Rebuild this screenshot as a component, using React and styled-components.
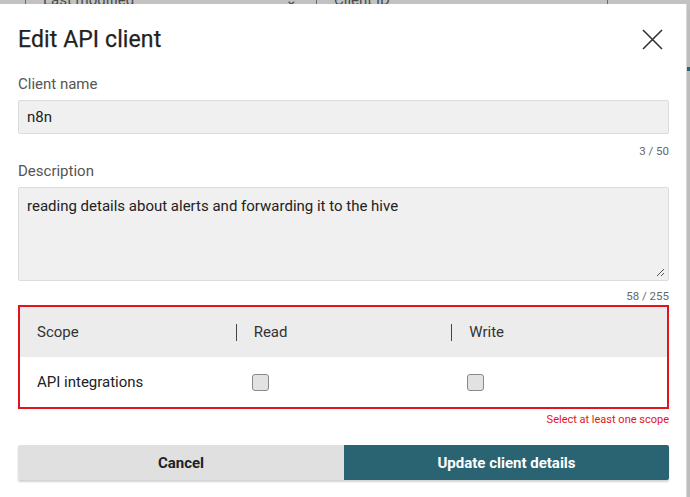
import React from "react";
import styled, { createGlobalStyle } from "styled-components";

const Global = createGlobalStyle`
  html, body { margin: 0; padding: 0; }
  body {
    width: 690px; height: 497px; overflow: hidden;
    background: #bdbdbd;
    font-family: Roboto, "Liberation Sans", Arial, sans-serif;
  }
  * { box-sizing: border-box; }
`;

const Page = styled.div`
  position: relative;
  width: 690px;
  height: 497px;
  overflow: hidden;
  background: #bdbdbd;
`;

const BgHeader = styled.div`
  display: grid;
  grid-template-columns: 25px 291px 291px 1fr;
  height: 20px;
  margin-top: -10px;
  background: #c2c2c2;
  color: #4a4a4a;
  font-size: 15px;
  align-items: center;
`;

const BgCell = styled.div`
  display: flex;
  align-items: center;
  justify-content: space-between;
  height: 100%;
  padding: 0 18px 0 ${(p) => p.$pad || 0}px;
  border-left: ${(p) => (p.$line ? "1px solid #6a6a6a" : "none")};
`;

const Overlay = styled.div`
  position: absolute;
  left: 0;
  top: 4px;
  width: 687px;
  height: 500px;
  background: #ffffff;
  border-right: 1px solid #d8d8d8;
  padding: 0 17px 0 18px;
  display: flex;
  flex-direction: column;
`;

const SideMark = styled.div`
  position: absolute;
  right: 0;
  top: 67px;
  width: 3px;
  height: 4px;
  background: #2a6473;
`;

const Header = styled.div`
  display: flex;
  align-items: center;
  justify-content: space-between;
  height: 70px;
`;

const Title = styled.h2`
  margin: 0;
  font-size: 23px;
  font-weight: 400;
  color: #222;
  letter-spacing: 0.1px;
  -webkit-text-stroke: 0.25px #222;
`;

const Close = styled.button`
  width: 24px;
  height: 24px;
  border: none;
  background: none;
  padding: 0;
  margin-right: 5px;
  display: flex;
  align-items: center;
  justify-content: center;
  cursor: pointer;
`;

const Label = styled.div`
  font-size: 15px;
  color: #555;
  height: 20px;
  line-height: 20px;
  margin-top: ${(p) => p.$mt || 0}px;
  margin-bottom: 6px;
`;

const Input = styled.div`
  height: 34px;
  background: #f0f0f0;
  border: 1px solid #dcdcdc;
  border-radius: 2px;
  padding: 0 8px;
  display: flex;
  align-items: center;
  font-size: 15px;
  color: #222;
`;

const TextArea = styled.div`
  position: relative;
  height: 94px;
  background: #f0f0f0;
  border: 1px solid #dcdcdc;
  border-radius: 2px;
  padding: 9px 8px;
  font-size: 15px;
  color: #222;
  line-height: 18px;
`;

const Grip = styled.svg`
  position: absolute;
  right: 3px;
  bottom: 3px;
`;

const Counter = styled.div`
  text-align: right;
  font-size: 11.5px;
  color: #666;
  height: 14px;
  line-height: 14px;
  margin-top: ${(p) => p.$mt ?? 10}px;
`;

const Table = styled.div`
  margin-top: 2px;
  border: 2px solid #e3131b;
  display: grid;
  grid-template-columns: 1fr 1fr 1fr;
`;

const HeadCell = styled.div`
  height: 50px;
  background: #ececec;
  display: flex;
  align-items: center;
  font-size: 15px;
  color: #333;
  padding-left: ${(p) => (p.$first ? 17 : 0)}px;
`;

const Divider = styled.span`
  width: 1px;
  height: 17px;
  background: #444;
  margin-right: 17px;
`;

const BodyCell = styled.div`
  height: 50px;
  background: #fff;
  display: flex;
  align-items: center;
  font-size: 15px;
  color: #222;
  padding-left: ${(p) => (p.$first ? 17 : 16)}px;
`;

const Check = styled.span`
  width: 17px;
  height: 17px;
  border: 1px solid #8a8a8a;
  border-radius: 3px;
  background: #e2e2e2;
`;

const Error = styled.div`
  text-align: right;
  color: #e3131b;
  font-size: 11px;
  margin-top: 4px;
  height: 14px;
  line-height: 14px;
`;

const Buttons = styled.div`
  margin-top: 18px;
  display: grid;
  grid-template-columns: 326px 1fr;
  box-shadow: 0 2px 2px rgba(0, 0, 0, 0.18);
  border-radius: 2px;
  overflow: hidden;
`;

const Btn = styled.button`
  height: 35px;
  border: none;
  font-family: inherit;
  font-size: 15px;
  font-weight: 700;
  background: ${(p) => (p.$primary ? "#2a6473" : "#e0e0e0")};
  color: ${(p) => (p.$primary ? "#fff" : "#222")};
  cursor: pointer;
`;

export default function App() {
  return (
    <Page>
      <Global />
      <BgHeader>
        <BgCell />
        <BgCell $line $pad={17}>
          <span>Last modified</span>
          <span>⌄</span>
        </BgCell>
        <BgCell $line $pad={17}>
          <span>Client ID</span>
        </BgCell>
        <BgCell $line />
      </BgHeader>
      <SideMark />
      <Overlay>
        <Header>
          <Title>Edit API client</Title>
          <Close aria-label="Close">
            <svg width="21" height="21" viewBox="0 0 21 21">
              <path d="M1 1 L20 20 M20 1 L1 20" stroke="#333" strokeWidth="1.6" fill="none" />
            </svg>
          </Close>
        </Header>
        <Label>Client name</Label>
        <Input>n8n</Input>
        <Counter>3 / 50</Counter>
        <Label $mt={3}>Description</Label>
        <TextArea>
          reading details about alerts and forwarding it to the hive
          <Grip width="9" height="9" viewBox="0 0 9 9">
            <path d="M8 1 L1 8 M8 5 L5 8" stroke="#555" strokeWidth="1" fill="none" />
          </Grip>
        </TextArea>
        <Counter $mt={8}>58 / 255</Counter>
        <Table>
          <HeadCell $first>Scope</HeadCell>
          <HeadCell>
            <Divider />
            Read
          </HeadCell>
          <HeadCell>
            <Divider />
            Write
          </HeadCell>
          <BodyCell $first>API integrations</BodyCell>
          <BodyCell>
            <Check />
          </BodyCell>
          <BodyCell>
            <Check />
          </BodyCell>
        </Table>
        <Error>Select at least one scope</Error>
        <Buttons>
          <Btn>Cancel</Btn>
          <Btn $primary>Update client details</Btn>
        </Buttons>
      </Overlay>
    </Page>
  );
}
